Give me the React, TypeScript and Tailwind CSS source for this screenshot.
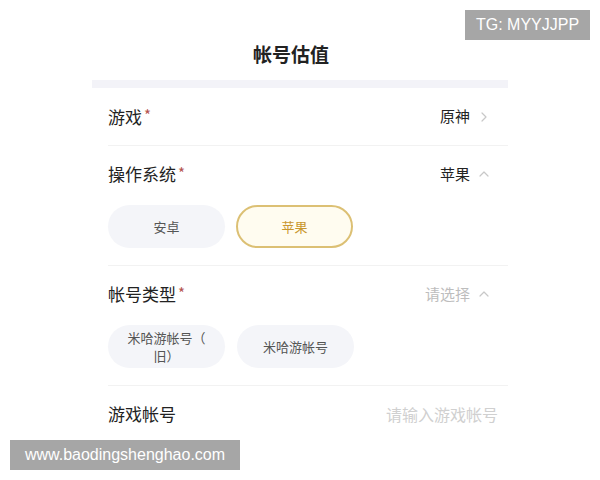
const FONT = { fontFamily: '"Noto Sans CJK SC", "Noto Sans", sans-serif' };

function ChevronRight() {
  return (
    <svg width="12" height="12" viewBox="0 0 12 12" className="ml-[8px]">
      <path d="M4 2l4 4-4 4" fill="none" stroke="#c8c8c8" strokeWidth="1.2" strokeLinecap="round" strokeLinejoin="round" />
    </svg>
  );
}

function ChevronUp() {
  return (
    <svg width="12" height="12" viewBox="0 0 12 12" className="ml-[8px]">
      <path d="M2 8l4-4 4 4" fill="none" stroke="#c8c8c8" strokeWidth="1.2" strokeLinecap="round" strokeLinejoin="round" />
    </svg>
  );
}

function Label({ text, required }: { text: string; required?: boolean }) {
  return (
    <div className="flex items-center text-[17px] text-[#222]">
      {text}
      {required && <span className="text-[#b5534f] text-[15px] ml-[2px] -mt-[2px]">*</span>}
    </div>
  );
}

function Chip({ children, active }: { children: React.ReactNode; active?: boolean }) {
  return (
    <div
      className={
        active
          ? "w-[117px] h-[43px] rounded-full border-2 border-[#dcc074] bg-[#fffcf0] flex items-center justify-center text-[13px] text-[#c9972f]"
          : "w-[117px] h-[43px] rounded-full bg-[#f4f5f9] flex items-center justify-center text-center text-[13px] leading-[18px] text-[#555]"
      }
    >
      {children}
    </div>
  );
}

export default function App() {
  return (
    <div className="relative w-[600px] h-[480px] bg-white overflow-hidden" style={FONT}>
      <div className="w-[416px] mx-auto">
        <div className="pt-[40px] h-[80px] text-center text-[19px] font-semibold text-[#222] pr-[18px]">帐号估值</div>
        <div className="h-[8px] bg-[#f3f3f8]" />

        <div className="pl-[16px]">
          <div className="h-[58px] border-b border-[#f2f2f2] flex items-center justify-between pr-[18px]">
            <Label text="游戏" required />
            <div className="flex items-center text-[15px] text-[#222]">
              原神
              <ChevronRight />
            </div>
          </div>

          <div className="pb-[17px] border-b border-[#f2f2f2]">
            <div className="h-[56px] flex items-center justify-between pr-[18px]">
              <Label text="操作系统" required />
              <div className="flex items-center text-[15px] text-[#222]">
                苹果
                <ChevronUp />
              </div>
            </div>
            <div className="mt-[3px] flex gap-[11px]">
              <Chip>安卓</Chip>
              <Chip active>苹果</Chip>
            </div>
          </div>

          <div className="pb-[17px] border-b border-[#f2f2f2]">
            <div className="h-[56px] flex items-center justify-between pr-[18px]">
              <Label text="帐号类型" required />
              <div className="flex items-center text-[15px] text-[#bdbdbd]">
                请选择
                <ChevronUp />
              </div>
            </div>
            <div className="mt-[3px] flex gap-[12px]">
              <Chip>
                <span>
                  米哈游帐号（
                  <br />
                  旧）
                </span>
              </Chip>
              <Chip>米哈游帐号</Chip>
            </div>
          </div>

          <div className="h-[56px] pr-[10px] flex items-center justify-between">
            <Label text="游戏帐号" />
            <div className="text-[16px] text-[#d0d0d0]">请输入游戏帐号</div>
          </div>
        </div>
      </div>

      <div
        className="absolute left-[465px] top-[10px] w-[125px] h-[30px] bg-[#a6a6a6] flex items-center justify-center text-white text-[16px]"
        style={{ fontFamily: '"Liberation Sans", Arial, sans-serif' }}
      >
        TG: MYYJJPP
      </div>
      <div
        className="absolute left-[10px] top-[440px] w-[230px] h-[30px] bg-[#a6a6a6] flex items-center justify-center text-white text-[16px]"
        style={{ fontFamily: '"Liberation Sans", Arial, sans-serif' }}
      >
        www.baodingshenghao.com
      </div>
    </div>
  );
}
